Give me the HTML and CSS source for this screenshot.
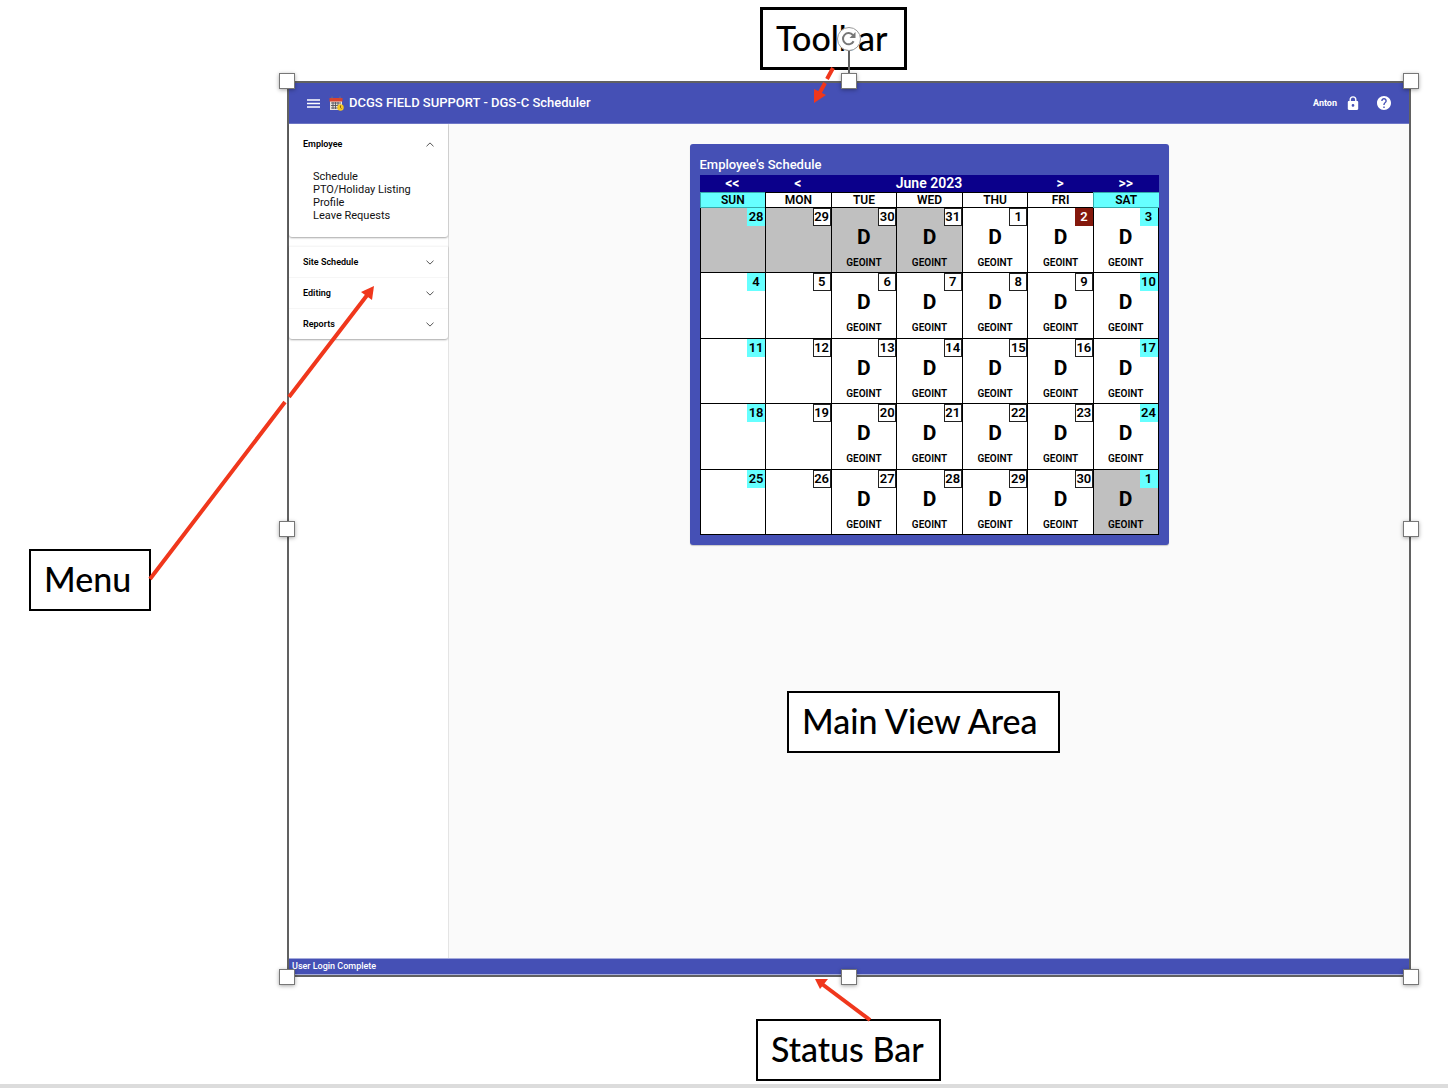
FILE: index.html
```html
<!DOCTYPE html>
<html lang="en">
<head>
<meta charset="utf-8">
<title>DGS-C Scheduler</title>
<link rel="stylesheet" href="styles.css">
</head>
<body>
<div class="slide">
  <div class="selection">
    <div class="app">
      <header class="toolbar">
        <button class="icon-btn" aria-label="Toggle menu"><svg width="13" height="9" viewBox="0 0 13 9"><path d="M0 1h13M0 4.5h13M0 8h13" stroke="#fff" stroke-width="1.3"/></svg></button>
        <svg class="logo" width="15" height="15" viewBox="0 0 15 15">
          <path d="M1 5h12v9H1z" fill="#e8e4dc"/>
          <path d="M.5 2h13v3.500H.5z" fill="#d8432f"/>
          <path d="M3 .5v2M11 .5v2" stroke="#777" stroke-width="1"/>
          <path d="M2 7h10M2 9.500h7M2 12h7M4 6v7M6.500 6v7M9 6v3" stroke="#55535c" stroke-width=".9"/>
          <circle cx="11.500" cy="11.500" r="3.200" fill="#f5c722"/>
          <path d="M11.500 9.500v2.200l1 .8" stroke="#7a5a10" stroke-width=".9" fill="none"/>
        </svg>
        <h1 class="title">DCGS FIELD SUPPORT - DGS-C Scheduler</h1>
        <span class="user">Anton</span>
        <button class="icon-btn lock" aria-label="Log out"><svg width="12" height="14" viewBox="0 0 12 14"><path fill="#fff" fill-rule="evenodd" d="M2.500 5V3.700a3.500 3.500 0 0 1 7 0V5h.6c.6 0 1.100.5 1.100 1.100v6.700c0 .6-.5 1.100-1.100 1.100H1.900C1.300 13.900.8 13.400.8 12.800V6.100C.8 5.500 1.300 5 1.900 5zM3.900 5h4.200V3.700a2.100 2.100 0 0 0-4.200 0zM6 8.100a1.300 1.300 0 1 0 0 2.700 1.300 1.300 0 0 0 0-2.700z"/></svg></button>
        <button class="icon-btn" aria-label="Help"><svg width="14" height="14" viewBox="2 2 20 20"><path fill="#fff" d="M12 2C6.480 2 2 6.480 2 12s4.480 10 10 10 10-4.480 10-10S17.520 2 12 2zm1 17h-2v-2h2v2zm2.070-7.750l-.9.920C13.450 12.900 13 13.500 13 15h-2v-.5c0-1.100.45-2.100 1.170-2.830l1.240-1.260c.37-.36.59-.86.59-1.410 0-1.100-.9-2-2-2s-2 .9-2 2H8c0-2.210 1.790-4 4-4s4 1.790 4 4c0 .88-.36 1.680-.93 2.250z"/></svg></button>
      </header>
      <div class="body">
        <nav class="sidebar">
          <details class="panel open-panel" open>
            <summary>Employee<svg width="8" height="5" viewBox="0 0 8 5"><path d="M.5 4.300 4 .9l3.500 3.400" /></svg></summary>
            <div class="links">
              <a href="#">Schedule</a>
              <a href="#">PTO/Holiday Listing</a>
              <a href="#">Profile</a>
              <a href="#">Leave Requests</a>
            </div>
          </details>
          <div class="group">
            <details class="panel"><summary>Site Schedule<svg width="8" height="5" viewBox="0 0 8 5"><path d="M.5.7 4 4.100 7.500.7"/></svg></summary></details>
            <details class="panel"><summary>Editing<svg width="8" height="5" viewBox="0 0 8 5"><path d="M.5.7 4 4.100 7.500.7"/></svg></summary></details>
            <details class="panel"><summary>Reports<svg width="8" height="5" viewBox="0 0 8 5"><path d="M.5.7 4 4.100 7.500.7"/></svg></summary></details>
          </div>
        </nav>
        <main class="main">
          <section class="card">
            <h2>Employee's Schedule</h2>
            <table class="calendar">
              <thead>
                <tr class="nav">
                  <th><button aria-label="Previous year">&lt;&lt;</button></th>
                  <th><button aria-label="Previous month">&lt;</button></th>
                  <th colspan="3">June 2023</th>
                  <th><button aria-label="Next month">&gt;</button></th>
                  <th><button aria-label="Next year">&gt;&gt;</button></th>
                </tr>
                <tr class="days"><th class="we">SUN</th><th>MON</th><th>TUE</th><th>WED</th><th>THU</th><th>FRI</th><th class="we">SAT</th></tr>
              </thead>
              <tbody>
                <tr>
                  <td class="out we"><span class="date">28</span></td>
                  <td class="out"><span class="date">29</span></td>
                  <td class="out"><span class="date">30</span><b>D</b><small>GEOINT</small></td>
                  <td class="out"><span class="date">31</span><b>D</b><small>GEOINT</small></td>
                  <td><span class="date">1</span><b>D</b><small>GEOINT</small></td>
                  <td class="today"><span class="date">2</span><b>D</b><small>GEOINT</small></td>
                  <td class="we"><span class="date">3</span><b>D</b><small>GEOINT</small></td>
                </tr>
                <tr>
                  <td class="we"><span class="date">4</span></td>
                  <td><span class="date">5</span></td>
                  <td><span class="date">6</span><b>D</b><small>GEOINT</small></td>
                  <td><span class="date">7</span><b>D</b><small>GEOINT</small></td>
                  <td><span class="date">8</span><b>D</b><small>GEOINT</small></td>
                  <td><span class="date">9</span><b>D</b><small>GEOINT</small></td>
                  <td class="we"><span class="date">10</span><b>D</b><small>GEOINT</small></td>
                </tr>
                <tr>
                  <td class="we"><span class="date">11</span></td>
                  <td><span class="date">12</span></td>
                  <td><span class="date">13</span><b>D</b><small>GEOINT</small></td>
                  <td><span class="date">14</span><b>D</b><small>GEOINT</small></td>
                  <td><span class="date">15</span><b>D</b><small>GEOINT</small></td>
                  <td><span class="date">16</span><b>D</b><small>GEOINT</small></td>
                  <td class="we"><span class="date">17</span><b>D</b><small>GEOINT</small></td>
                </tr>
                <tr>
                  <td class="we"><span class="date">18</span></td>
                  <td><span class="date">19</span></td>
                  <td><span class="date">20</span><b>D</b><small>GEOINT</small></td>
                  <td><span class="date">21</span><b>D</b><small>GEOINT</small></td>
                  <td><span class="date">22</span><b>D</b><small>GEOINT</small></td>
                  <td><span class="date">23</span><b>D</b><small>GEOINT</small></td>
                  <td class="we"><span class="date">24</span><b>D</b><small>GEOINT</small></td>
                </tr>
                <tr>
                  <td class="we"><span class="date">25</span></td>
                  <td><span class="date">26</span></td>
                  <td><span class="date">27</span><b>D</b><small>GEOINT</small></td>
                  <td><span class="date">28</span><b>D</b><small>GEOINT</small></td>
                  <td><span class="date">29</span><b>D</b><small>GEOINT</small></td>
                  <td><span class="date">30</span><b>D</b><small>GEOINT</small></td>
                  <td class="out we"><span class="date">1</span><b>D</b><small>GEOINT</small></td>
                </tr>
              </tbody>
            </table>
          </section>
        </main>
      </div>
      <footer class="status">User Login Complete</footer>
    </div>
  </div>

  <div class="callout callout-toolbar">Toolbar</div>
  <div class="callout callout-menu">Menu</div>
  <div class="callout callout-main">Main View Area</div>
  <div class="callout callout-status">Status Bar</div>

  <svg class="arrows" width="1448" height="1088" viewBox="0 0 1448 1088">
    <g stroke="#f0371c" stroke-width="4" fill="none">
      <path d="M833 68 827 79M825 83 819 94"/>
      <path d="M150 579 285 402M289 397 368 294"/>
      <path d="M870 1020 822 984"/>
    </g>
    <g fill="#f0371c">
      <path d="M814 103 814 89 826 95z"/>
      <path d="M374 286 361 292 372 300z"/>
      <path d="M815 979 828 979 820 989z"/>
    </g>
  </svg>

  <div class="handles">
    <i class="handle top left"></i><i class="handle top center"></i><i class="handle top right"></i>
    <i class="handle middle left"></i><i class="handle middle right"></i>
    <i class="handle bottom left"></i><i class="handle bottom center"></i><i class="handle bottom right"></i>
    <i class="stem"></i>
    <svg class="rotate" width="24" height="24" viewBox="0 0 24 24"><circle cx="12" cy="12" r="11.500" fill="#fff" stroke="#999"/><path d="M16.600 14.200A5.600 5.600 0 1 1 16 8.200" fill="none" stroke="#777" stroke-width="2"/><path d="M18.500 5v6h-6z" fill="#777"/></svg>
  </div>
</div>
</body>
</html>
```
FILE: styles.css
```css
* { box-sizing: border-box; }

body {
  margin: 0;
  background: #fff;
  color: #000;
  font-family: Roboto, "Liberation Sans", sans-serif;
}

button {
  padding: 0;
  border: 0;
  background: none;
  color: inherit;
  font: inherit;
}

.slide {
  position: relative;
  display: flex;
  min-height: 100vh;
  padding: 81px 37px 107px 287px;
  border-bottom: 4px solid #dcdcdc;
  overflow: hidden;
}

.selection { display: flex; flex: 1; }

.app {
  display: flex;
  flex: 1;
  flex-direction: column;
  border: 2px solid #616161;
}

/* Toolbar */
.toolbar {
  display: flex;
  align-items: center;
  height: 41px;
  padding: 0 18px;
  background: #4550b5;
  border-bottom: 1px solid #6e77c8;
  color: #fff;
}
.icon-btn { display: flex; }
.logo { margin: 0 5px 0 9px; }
.title { flex: 1; margin: 0; padding-bottom: 2px; font-size: 13px; font-weight: 500; }
.user { font-size: 9px; font-weight: 700; }
.lock { margin: 0 18px 0 10px; }

/* Side menu */
.body { display: flex; flex: 1; }
.sidebar {
  display: flex;
  flex-direction: column;
  gap: 10px;
  width: 160px;
  border-right: 1px solid #e4e4e4;
}
.open-panel, .group {
  border-radius: 0 0 3px 3px;
  box-shadow: 0 1px 2px rgba(0, 0, 0, .35);
}
.open-panel { margin-bottom: -1px; }
.group .panel { border-top: 1px solid #f6f6f6; }
.panel summary {
  display: flex;
  align-items: center;
  justify-content: space-between;
  height: 30px;
  padding: 0 14px;
  font-size: 9px;
  font-weight: 600;
  list-style: none;
}
.open-panel summary { height: 40px; }
.panel svg { fill: none; stroke: #555; }
.links {
  display: flex;
  flex-direction: column;
  padding: 6px 24px 15px;
}
.links a {
  color: #111;
  font-size: 11px;
  line-height: 13px;
  text-decoration: none;
  white-space: nowrap;
}

/* Main view */
.main {
  display: flex;
  flex: 1;
  align-items: flex-start;
  justify-content: center;
  padding: 20px;
  background: #fafafa;
}
.card {
  padding: 11px 10px 10px;
  border-radius: 3px;
  background: #4550b5;
  color: #fff;
  box-shadow: 0 1px 1px rgba(0, 0, 0, .2);
}
.card h2 { margin: 0; font-size: 13px; font-weight: 500; line-height: 20px; }

.calendar {
  width: 459px;
  border-spacing: 0;
  table-layout: fixed;
  background: #fff;
  color: #000;
}
.calendar th { padding: 0; font-weight: 600; text-align: center; }
.nav th { height: 17px; background: #0b008b; color: #fff; font-size: 14px; line-height: 17px; }
.days th {
  height: 16px;
  border: solid #000;
  border-width: 1px 0 1px 1px;
  font-size: 12px;
  line-height: 14px;
}
.days .we { border-color: #3aa; background: #66ffff; }
.calendar td {
  height: 65px;
  padding: 0;
  border: solid #000;
  border-width: 0 0 1px 1px;
  font-weight: 600;
  text-align: center;
  vertical-align: top;
}
.calendar tbody tr:nth-child(even) td { height: 66px; }
.calendar td:last-child { border-right: 1px solid #000; }
.calendar .out { background: #c0c0c0; }
.date {
  display: block;
  width: 18px;
  height: 18px;
  margin-left: auto;
  border: 1px solid #222;
  background: #fff;
  font-size: 13px;
  line-height: 16px;
}
.we .date { border-color: #66ffff; background: #66ffff; }
.today .date { border-color: #84180c; background: #84180c; color: #fff; }
.calendar b { display: block; font-size: 21px; font-weight: 700; line-height: 22px; }
.calendar small { display: block; padding-top: 8px; font-size: 10px; line-height: 13px; }

/* Status bar */
.status {
  height: 17px;
  padding: 0 3px;
  border: solid #a5abdc;
  border-width: 1px 0;
  background: #4550b5;
  color: #fff;
  font-size: 9px;
  font-weight: 500;
  line-height: 15px;
}

/* Slide annotations */
.callout {
  position: absolute;
  border: 2px solid #000;
  background: #fff;
  padding: 0 13px 2px;
  font-family: Lato, "Open Sans", sans-serif;
  font-size: 34px;
  font-weight: 500;
  line-height: 56px;
  white-space: nowrap;
}
.callout-toolbar { top: 7px; left: 760px; min-width: 147px; border-width: 3px; line-height: 55px; }
.callout-menu { top: 549px; left: 29px; min-width: 122px; }
.callout-main { top: 691px; left: 787px; min-width: 273px; }
.callout-status { top: 1019px; left: 756px; min-width: 185px; }
.arrows { position: absolute; top: 0; left: 0; }

/* Selection handles, around the edge of the picture */
.handles {
  position: absolute;
  top: 81px;
  right: 37px;
  bottom: 107px;
  left: 287px;
  pointer-events: none;
}
.handle {
  position: absolute;
  width: 16px;
  height: 16px;
  margin: -8px;
  border: 1px solid #777;
  background: #fff;
  box-shadow: 0 1px 4px rgba(0, 0, 0, .35);
}
.top { top: 0; }
.middle { top: 50%; }
.bottom { top: 100%; }
.left { left: 0; }
.center { left: 50%; }
.right { left: 100%; }
.stem {
  position: absolute;
  top: -32px;
  left: 50%;
  width: 2px;
  height: 24px;
  margin-left: -1px;
  background: #616161;
}
.rotate { position: absolute; top: -54px; left: 50%; margin-left: -12px; }
```
